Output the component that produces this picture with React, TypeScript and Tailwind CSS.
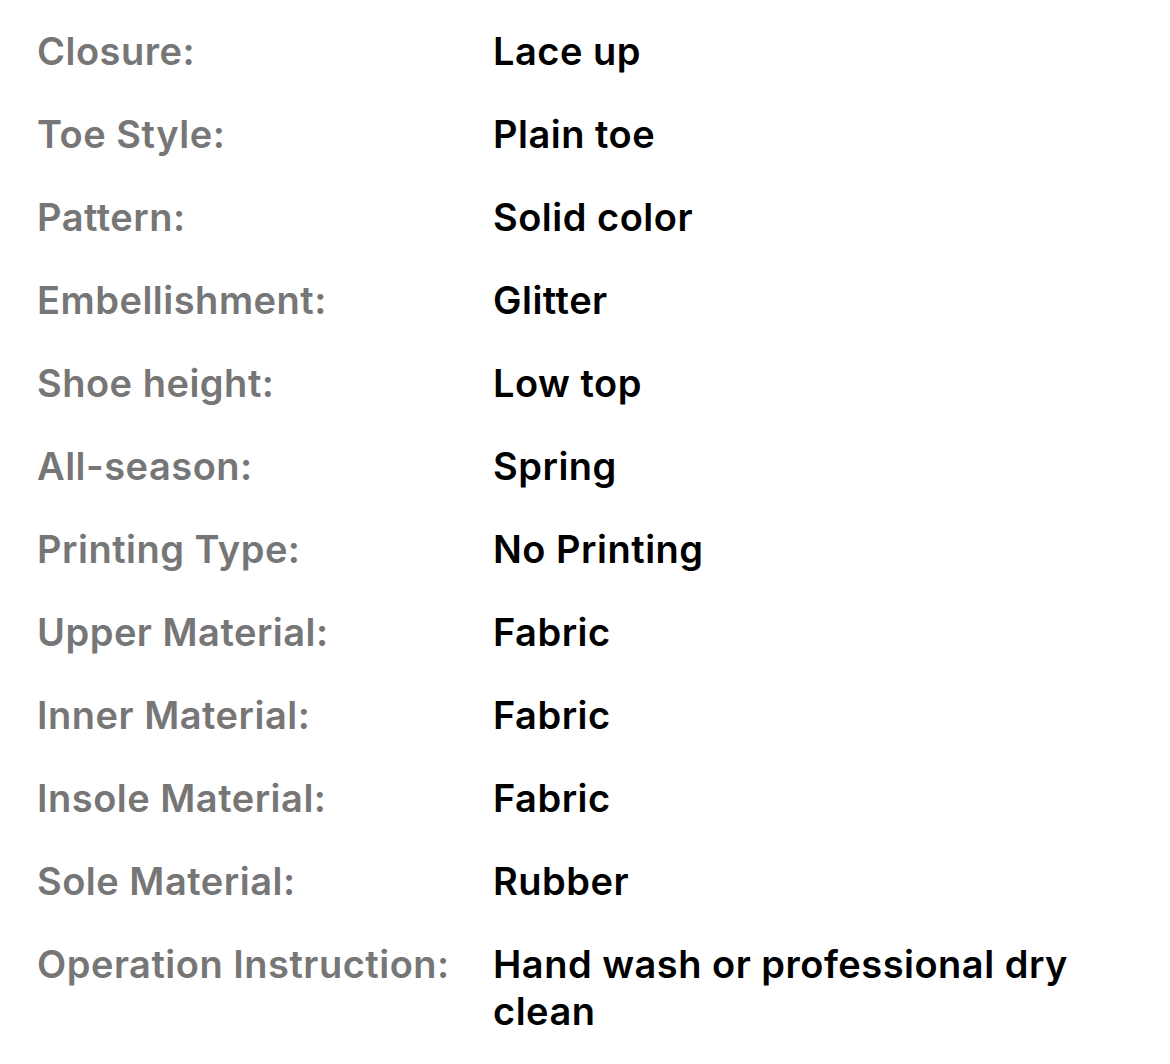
import React from "react";

const rows: [string, string][] = [
  ["Closure:", "Lace up"],
  ["Toe Style:", "Plain toe"],
  ["Pattern:", "Solid color"],
  ["Embellishment:", "Glitter"],
  ["Shoe height:", "Low top"],
  ["All-season:", "Spring"],
  ["Printing Type:", "No Printing"],
  ["Upper Material:", "Fabric"],
  ["Inner Material:", "Fabric"],
  ["Insole Material:", "Fabric"],
  ["Sole Material:", "Rubber"],
  ["Operation Instruction:", "Hand wash or professional dry clean"],
];

export default function App() {
  return (
    <div
      className="min-h-[1064px] w-[1170px] bg-white pl-[37px] pr-[50px] pt-[28px]"
      style={{ fontFamily: "Inter, 'Noto Sans', sans-serif" }}
    >
      <div className="flex flex-col gap-[36px]">
        {rows.map(([k, v]) => (
          <div key={k} className="flex text-[38px] leading-[47px] font-semibold tracking-[0.5px]">
            <div className="w-[456px] shrink-0 text-[#767676]">{k}</div>
            <div className="flex-1 text-black">{v}</div>
          </div>
        ))}
      </div>
    </div>
  );
}
